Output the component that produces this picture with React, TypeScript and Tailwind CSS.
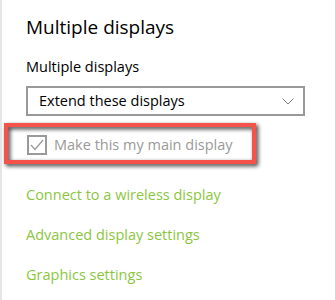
export default function App() {
  const font = { fontFamily: '"Open Sans", "Noto Sans", sans-serif' };
  return (
    <div className="w-[335px] h-[300px] bg-white flex overflow-hidden" style={font}>
      <div className="w-[2px] shrink-0 bg-[#e6e6e6]" />
      <div className="flex-1 flex flex-col pl-[24px]">
        <h1 className="text-[19px] leading-[28px] mt-[13px] text-black font-normal">Multiple displays</h1>
        <div className="text-[14.5px] leading-[20px] mt-[16px] text-black">Multiple displays</div>
        <div className="mt-[9px] w-[279px] h-[30px] border-2 border-[#999999] flex items-center justify-between pl-[11px] pr-[9px] text-[14.5px] text-black">
          <span>Extend these displays</span>
          <svg width="12" height="7" viewBox="0 0 12 7" fill="none">
            <path d="M0.5 0.5 L6 6 L11.5 0.5" stroke="#7a7a7a" strokeWidth="1" />
          </svg>
        </div>
        <div className="relative mt-[19px] h-[20px] flex items-center gap-[7px] text-[14.5px]">
          <div className="w-[20px] h-[20px] border-2 border-[#9a9a9a] flex items-center justify-center ml-[1px]">
            <svg width="14" height="12" viewBox="0 0 14 12" fill="none">
              <path d="M1 6 L5 10.5 L13 1" stroke="#9a9a9a" strokeWidth="1.3" />
            </svg>
          </div>
          <span className="text-[#999999] leading-[20px]">Make this my main display</span>
          <div className="absolute left-[-22px] top-[-12px] w-[252px] h-[41px] border-[4px] border-[#f4524b] [filter:drop-shadow(2px_2px_2px_rgba(0,0,0,0.8))]" />
        </div>
        <div className="flex flex-col mt-[30px] text-[14.5px] leading-[20px] text-[#8cc63f] gap-[20px]">
          <span>Connect to a wireless display</span>
          <span>Advanced display settings</span>
          <span>Graphics settings</span>
        </div>
      </div>
    </div>
  );
}
